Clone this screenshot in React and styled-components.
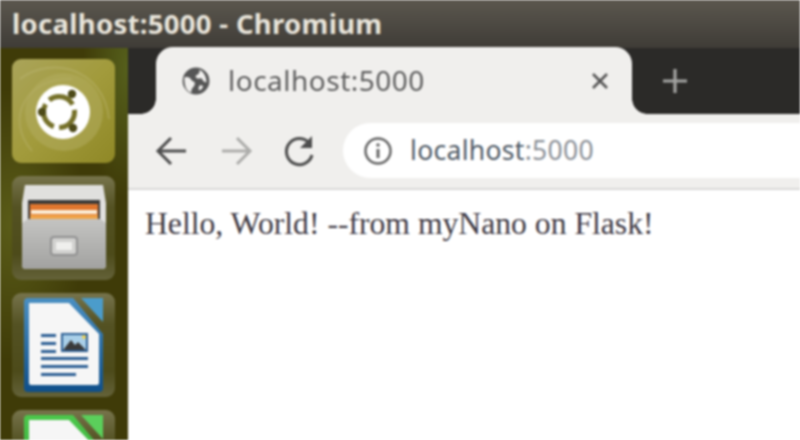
import React from "react";
import styled, { createGlobalStyle } from "styled-components";

const Global = createGlobalStyle`
  html, body { margin: 0; padding: 0; background: #fff; overflow: hidden; }
  #root { width: 800px; height: 440px; overflow: hidden; }
`;

const Screen = styled.div`
  width: 800px;
  height: 440px;
  display: flex;
  flex-direction: column;
  overflow: hidden;
  filter: blur(0.85px);
`;

const TitleBar = styled.header`
  height: 48px;
  flex: none;
  box-sizing: border-box;
  padding-left: 12px;
  display: flex;
  align-items: center;
  background: linear-gradient(#5b574e, #3f3c37);
  color: #e8e4da;
  font: 700 27.5px/1 "Noto Sans", sans-serif;
  letter-spacing: 0.3px;
`;

const Desktop = styled.div`
  flex: 1;
  min-height: 0;
  display: flex;
`;

const Dock = styled.nav`
  width: 128px;
  flex: none;
  box-sizing: border-box;
  padding: 11px 13px 0 12px;
  display: flex;
  flex-direction: column;
  gap: 13px;
  overflow: hidden;
  background:
    radial-gradient(ellipse at 10% 45%, #5a5c18 0, transparent 45%),
    radial-gradient(ellipse at 100% 5%, #56601c 0, transparent 25%),
    #3f3b08;
`;

const Tile = styled.div`
  width: 103px;
  height: 104px;
  flex: none;
  border-radius: 9px;
  display: flex;
  align-items: center;
  justify-content: center;
  overflow: hidden;
  background: ${(p) =>
    p.$solid
      ? "linear-gradient(135deg, #aaa45a 0, #a29b3c 50%, #8f8826 100%)"
      : "linear-gradient(#77744c, #545223 30%, #4d4b1a 75%, #646239)"};
`;

const Browser = styled.main`
  flex: 1;
  min-width: 0;
  display: flex;
  flex-direction: column;
`;

const TabStrip = styled.div`
  height: 66px;
  flex: none;
  box-sizing: border-box;
  padding-left: 28px;
  display: flex;
  align-items: flex-end;
  background: #2b2a28;
`;

const Tab = styled.div`
  position: relative;
  width: 476px;
  height: 67px;
  margin-top: -1px;
  box-sizing: border-box;
  padding: 0 23px 0 26px;
  display: flex;
  align-items: center;
  gap: 18px;
  background: #f0efed;
  border-radius: 17px 17px 0 0;
  color: #5f5f5f;
  font: 400 28px/1 "Noto Sans", sans-serif;
  letter-spacing: 0.5px;

  &::before, &::after {
    content: "";
    position: absolute;
    bottom: 0;
    width: 15px;
    height: 15px;
  }
  &::before {
    left: -15px;
    background: radial-gradient(circle at 0 0, #2b2a28 14.5px, #f0efed 15px);
  }
  &::after {
    right: -15px;
    background: radial-gradient(circle at 100% 0, #2b2a28 14.5px, #f0efed 15px);
  }
`;

const TabTitle = styled.span`
  flex: 1;
  padding-bottom: 2px;
`;

const NewTab = styled.div`
  width: 26px;
  height: 26px;
  margin: 0 0 20px 30px;
  flex: none;
`;

const Toolbar = styled.div`
  height: 76px;
  flex: none;
  box-sizing: border-box;
  padding: 9px 0 10px 26px;
  display: flex;
  align-items: center;
  gap: 28px;
  background: #f0efed;
  border-bottom: 2px solid #d9d9d7;
`;

const NavIcon = styled.svg`
  width: 36px;
  height: 36px;
  flex: none;
  margin-right: ${(p) => p.$pull || 0}px;
`;

const Omnibox = styled.div`
  flex: 1;
  height: 55px;
  box-sizing: border-box;
  padding-left: 20px;
  display: flex;
  align-items: center;
  gap: 17px;
  background: #fff;
  border-radius: 28px 0 0 28px;
`;

const Url = styled.span`
  font: 400 26.5px/1 "Noto Sans", sans-serif;
  letter-spacing: 0.3px;
  color: #4f5a66;
`;

const Port = styled.span`
  color: #8b9097;
`;

const Page = styled.section`
  flex: 1;
  padding: 16px 0 0 17px;
  background: #fff;
  color: #3f3a44;
  font: 400 31.66px/36px "Liberation Serif", serif;
`;

const UbuntuLogo = () => (
  <svg width="103" height="104" viewBox="0 0 103 104">
    <path d="M8 20C40 -4 92 10 97 60" fill="none" stroke="#c3bd80" strokeWidth="2" opacity=".35" />
    <path d="M20 92C-8 60 14 18 60 20" fill="none" stroke="#c3bd80" strokeWidth="2" opacity=".3" />
    <circle cx="52" cy="53" r="39" fill="#b4ae62" opacity=".5" />
    <circle cx="51" cy="53" r="27" fill="#fff" />
    <circle cx="47" cy="53" r="15.5" fill="none" stroke="#76712a" strokeWidth="5" strokeDasharray="27 5.5" strokeDashoffset="3" />
    <circle cx="60" cy="35" r="4.2" fill="#4d4a18" />
    <circle cx="30" cy="53" r="4.2" fill="#4d4a18" />
    <circle cx="61" cy="69" r="4.2" fill="#4d4a18" />
  </svg>
);

const Cabinet = () => (
  <svg width="86" height="90" viewBox="0 0 86 90">
    <defs>
      <linearGradient id="cab" x1="0" y1="0" x2="0" y2="1">
        <stop offset="0" stopColor="#c4c4c2" />
        <stop offset="1" stopColor="#a2a2a0" />
      </linearGradient>
    </defs>
    <path d="M4 2h78l3 18v62a4 4 0 0 1-4 4H5a4 4 0 0 1-4-4V20z" fill="#e0e0de" />
    <rect x="7" y="17" width="72" height="20" fill="#3b3a38" />
    <rect x="9" y="21" width="68" height="16" fill="#e0762e" />
    <rect x="10" y="27" width="66" height="4" fill="#fbeed8" />
    <rect x="9" y="32" width="68" height="5" fill="#f0a44a" />
    <path d="M1 40l6-4h72l6 4v42a4 4 0 0 1-4 4H5a4 4 0 0 1-4-4z" fill="url(#cab)" />
    <rect x="30" y="54" width="26" height="18" rx="3" fill="#d0d0ce" stroke="#909090" strokeWidth="2" />
    <rect x="35" y="59" width="16" height="8" fill="#efefed" />
  </svg>
);

const DocIcon = ({ top, bottom, corner, id, children }) => (
  <svg width="82" height="96" viewBox="0 0 82 96">
    <defs>
      <linearGradient id={id} x1="0" y1="0" x2="0" y2="1">
        <stop offset="0" stopColor={top} />
        <stop offset="1" stopColor={bottom} />
      </linearGradient>
    </defs>
    <path d="M1 5a4 4 0 0 1 4-4h45l30 36v54a4 4 0 0 1-4 4H5a4 4 0 0 1-4-4z" fill={`url(#${id})`} />
    <path d="M58 1h22v24z" fill={corner} />
    <path d="M6 6h40l30 31v49a2 2 0 0 1-2 2H8a2 2 0 0 1-2-2z" fill="#f6f6f6" />
    {children}
  </svg>
);

const WriterBody = () => (
  <g fill="#2d5f94">
    <rect x="18" y="37" width="15" height="3" />
    <rect x="18" y="45" width="15" height="3" />
    <rect x="18" y="53" width="15" height="3" />
    <rect x="18" y="60" width="47" height="3" />
    <rect x="18" y="68" width="47" height="3" />
    <rect x="18" y="76" width="35" height="3" />
    <rect x="38" y="36" width="27" height="19" />
    <rect x="40" y="38" width="23" height="15" fill="#a9cfe8" />
    <path d="M40 53l8-10 4 5 3-3 8 8z" fill="#3a3a3a" />
    <circle cx="61" cy="40" r="2" fill="#f2d04c" />
  </g>
);

const Globe = () => (
  <svg width="28" height="28" viewBox="0 0 24 24" style={{ flex: "none" }}>
    <circle cx="12" cy="12" r="11.5" fill="#565656" />
    <path d="M2 9c3-1 5 0 6 2s3 1 3 3-1 3-2 4-1 3-1 4c-4-1-6-5-6-13zM14 2c2 1 1 3 0 4s-3 1-2 3 4 0 5 1 1 3 4 3c0-5-3-10-7-11zM15 16c2-1 3 0 3 1s-2 3-3 3-1-3 0-4z" fill="#f0efed" />
  </svg>
);

export default function App() {
  return (
    <>
      <Global />
      <Screen>
        <TitleBar>localhost:5000 - Chromium</TitleBar>
        <Desktop>
          <Dock>
            <Tile $solid><UbuntuLogo /></Tile>
            <Tile><Cabinet /></Tile>
            <Tile><DocIcon id="w" top="#4a8fc2" bottom="#0f4f8a" corner="#4b9ccb"><WriterBody /></DocIcon></Tile>
            <Tile><DocIcon id="c" top="#4cc84c" bottom="#2f9a2f" corner="#5bcf5b" /></Tile>
          </Dock>
          <Browser>
            <TabStrip>
              <Tab>
                <Globe />
                <TabTitle>localhost:5000</TabTitle>
                <svg width="18" height="18" viewBox="0 0 18 18" style={{ flex: "none" }}>
                  <path d="M2 2l14 14M16 2L2 16" stroke="#555" strokeWidth="2.6" />
                </svg>
              </Tab>
              <NewTab>
                <svg width="26" height="26" viewBox="0 0 26 26">
                  <path d="M13 1v24M1 13h24" stroke="#a3a3a1" strokeWidth="3.2" />
                </svg>
              </NewTab>
            </TabStrip>
            <Toolbar>
              <NavIcon viewBox="0 0 36 36">
                <path d="M32 18H5M17 5L4 18l13 13" fill="none" stroke="#4e4e4e" strokeWidth="3" />
              </NavIcon>
              <NavIcon viewBox="0 0 36 36">
                <path d="M4 18h27M19 5l13 13-13 13" fill="none" stroke="#adadab" strokeWidth="3" />
              </NavIcon>
              <NavIcon viewBox="0 0 36 36" $pull={-3}>
                <path d="M28 11a13 13 0 1 0 2 11" fill="none" stroke="#4e4e4e" strokeWidth="3" />
                <path d="M30 3v12H18z" fill="#4e4e4e" />
              </NavIcon>
              <Omnibox>
                <svg width="30" height="30" viewBox="0 0 30 30" style={{ flex: "none" }}>
                  <circle cx="15" cy="15" r="12.5" fill="none" stroke="#666" strokeWidth="2.5" />
                  <path d="M15 13v9" stroke="#666" strokeWidth="3" />
                  <circle cx="15" cy="9" r="1.8" fill="#666" />
                </svg>
                <Url>localhost<Port>:5000</Port></Url>
              </Omnibox>
            </Toolbar>
            <Page>Hello, World! --from myNano on Flask!</Page>
          </Browser>
        </Desktop>
      </Screen>
    </>
  );
}
